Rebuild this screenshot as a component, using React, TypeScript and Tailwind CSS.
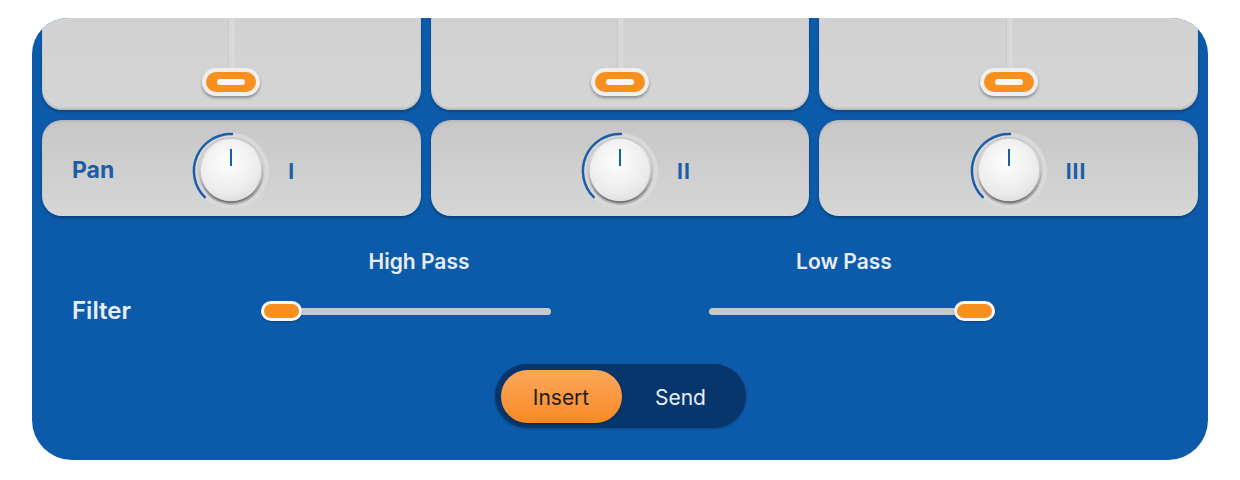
import React from "react";

const BLUE = "#1a5ea8";

const Knob = ({ id }: { id: string }) => (
  <svg width="80" height="80" viewBox="0 0 80 80" className="shrink-0 mt-[6px]">
    <defs>
      <linearGradient id={`rim-${id}`} x1="0" y1="0" x2="0" y2="1">
        <stop offset="0" stopColor="#f4f4f4" />
        <stop offset="0.6" stopColor="#bdbdbd" />
        <stop offset="1" stopColor="#6c6c6c" />
      </linearGradient>
      <radialGradient id={`face-${id}`} cx="0.45" cy="0.35" r="0.75">
        <stop offset="0" stopColor="#fefefe" />
        <stop offset="0.7" stopColor="#ebebeb" />
        <stop offset="1" stopColor="#d6d6d6" />
      </radialGradient>
    </defs>
    <circle cx="40" cy="40" r="36" fill="none" stroke="#d9d9d9" strokeWidth="4" />
    <path
      d="M 41 3 A 37 37 0 0 0 13.8 66.2"
      fill="none"
      stroke={BLUE}
      strokeWidth="2.5"
      strokeLinecap="round"
    />
    <circle cx="40.5" cy="42" r="32" fill="rgba(0,0,0,0.18)" />
    <circle cx="40" cy="40" r="32" fill={`url(#rim-${id})`} />
    <circle cx="40" cy="40" r="30.3" fill={`url(#face-${id})`} />
    <line x1="40" y1="18" x2="40" y2="35" stroke={BLUE} strokeWidth="2" />
  </svg>
);

const FaderCard = () => (
  <div className="h-[116px] rounded-[20px] bg-gradient-to-b from-[#d1d1d1] to-[#d5d5d5] shadow-[inset_0_-2px_2px_rgba(0,0,0,0.12),0_2px_3px_rgba(0,0,0,0.25)] flex flex-col items-center pb-[14px]">
    <div className="flex-1 w-[4px] bg-[#d8d8d8] shadow-[-1px_0_0_rgba(0,0,0,0.05),1px_0_0_rgba(255,255,255,0.3)]" />
    <div className="w-[58px] h-[28px] rounded-full bg-[#efefef] p-[4px] shadow-[0_2px_3px_rgba(0,0,0,0.35)]">
      <div className="h-full w-full rounded-full bg-[#f7901e] flex items-center justify-center">
        <div className="w-[28px] h-[6px] rounded-full bg-[#f6f6f6]" />
      </div>
    </div>
  </div>
);

const PanCard = ({ label, numeral, id }: { label?: string; numeral: string; id: string }) => (
  <div className="h-[96px] rounded-[20px] bg-gradient-to-b from-[#c7c7c7] to-[#d6d6d6] shadow-[inset_0_2px_2px_rgba(0,0,0,0.08),0_2px_3px_rgba(0,0,0,0.3)] grid grid-cols-[1fr_auto_1fr] items-center">
    <div className="pl-[30px] pt-[4px]">
      {label && (
        <span className="text-[23px] font-bold text-[#1a5ea8]">{label}</span>
      )}
    </div>
    <Knob id={id} />
    <div className="pl-[17px] pt-[8px]">
      <span className="text-[21px] font-bold text-[#1a5ea8] tracking-[1px]">{numeral}</span>
    </div>
  </div>
);

const Slider = ({ thumbRight }: { thumbRight?: boolean }) => (
  <div className="relative h-[20px] flex items-center">
    <div className="w-full h-[7px] rounded-full bg-[#c9c9c9]" />
    <div
      className={`absolute top-0 ${thumbRight ? "right-0" : "left-0"} w-[41px] h-[20px] rounded-full bg-[#f7f7f7] p-[3px] shadow-[0_1px_2px_rgba(0,0,0,0.3)]`}
    >
      <div className="w-full h-full rounded-full bg-[#f7901e]" />
    </div>
  </div>
);

export default function App() {
  return (
    <div
      className="w-[1240px] h-[480px] bg-white pt-[18px] pl-[32px]"
      style={{ fontFamily: "Inter, 'Noto Sans', sans-serif" }}
    >
      <div className="w-[1176px] h-[442px] rounded-t-[36px] rounded-b-[40px] bg-[#0c5bab] overflow-hidden px-[10px]">
        <div className="grid grid-cols-3 gap-[10px] -mt-[24px]">
          <FaderCard />
          <FaderCard />
          <FaderCard />
        </div>
        <div className="grid grid-cols-3 gap-[10px] mt-[10px]">
          <PanCard label="Pan" numeral="I" id="a" />
          <PanCard numeral="II" id="b" />
          <PanCard numeral="III" id="c" />
        </div>

        <div className="flex items-end pl-[30px] mt-[34px]">
          <div className="w-[189px] h-[20px] flex items-center">
            <span className="text-[24px] font-semibold text-[#e8edf4]">Filter</span>
          </div>
          <div className="w-[290px] flex flex-col">
            <div className="h-[24px] text-center pl-[26px] text-[21px] font-semibold text-[#e8edf4] leading-[24px]">
              High Pass
            </div>
            <div className="mt-[27px]">
              <Slider />
            </div>
          </div>
          <div className="w-[158px]" />
          <div className="w-[286px] flex flex-col">
            <div className="h-[24px] text-center pr-[16px] text-[21px] font-semibold text-[#e8edf4] leading-[24px]">
              Low Pass
            </div>
            <div className="mt-[27px]">
              <Slider thumbRight />
            </div>
          </div>
        </div>

        <div className="flex justify-center mt-[43px]">
          <div className="w-[251px] h-[64px] rounded-full bg-[#07366d] p-[6px] flex items-center shadow-[0_1px_3px_rgba(0,0,0,0.25)]">
            <div className="w-[121px] h-[53px] rounded-full bg-gradient-to-b from-[#fca75a] to-[#f78a1f] flex items-center justify-center pt-[3px] shadow-[0_1px_2px_rgba(0,0,0,0.3)]">
              <span className="text-[21px] text-[#1d1d1d]">Insert</span>
            </div>
            <div className="flex-1 flex items-center justify-center pt-[3px]">
              <span className="text-[21px] text-[#e9eef5]">Send</span>
            </div>
          </div>
        </div>
      </div>
    </div>
  );
}
